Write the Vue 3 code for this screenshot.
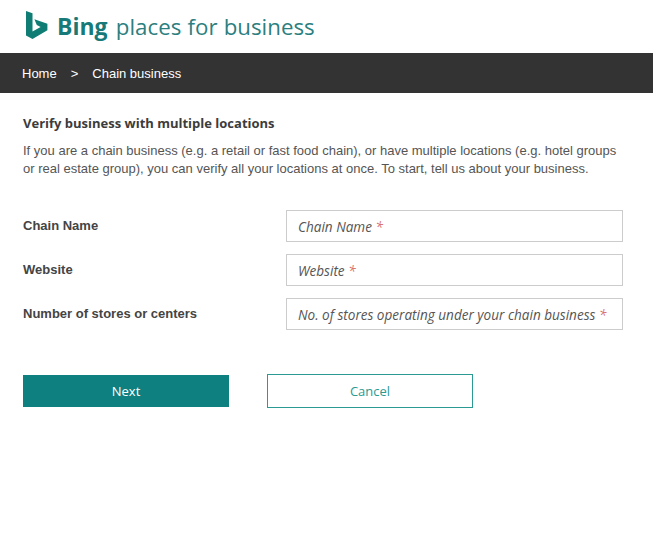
<template>
  <div class="page">
    <header class="brand">
      <svg class="logo" width="22" height="29" viewBox="0 0 22 29">
        <path d="M0 0 L6.5 2.2 L6.5 20.6 L14.6 15.9 L10.8 14.1 L8.4 8.2 L21.4 12.8 L21.4 19.2 L6.5 28 L0 24.4 Z" fill="#0f7d74" />
      </svg>
      <span class="brand-text"><b>Bing</b> places for business</span>
    </header>

    <nav class="crumbs">
      <span>Home</span>
      <span class="sep">&gt;</span>
      <span>Chain business</span>
    </nav>

    <main class="content">
      <h1>Verify business with multiple locations</h1>
      <p>
        If you are a chain business (e.g. a retail or fast food chain), or have multiple locations (e.g. hotel groups<br>
        or real estate group), you can verify all your locations at once. To start, tell us about your business.
      </p>

      <div class="form">
        <div v-for="f in fields" :key="f.label" class="row">
          <label>{{ f.label }}</label>
          <div class="input">{{ f.hint }} <span class="req">*</span></div>
        </div>
      </div>

      <div class="actions">
        <button class="btn next">Next</button>
        <button class="btn cancel">Cancel</button>
      </div>
    </main>
  </div>
</template>

<script setup>
const fields = [
  { label: 'Chain Name', hint: 'Chain Name' },
  { label: 'Website', hint: 'Website' },
  { label: 'Number of stores or centers', hint: 'No. of stores operating under your chain business' },
]
</script>

<style>
html, body { margin: 0; background: #fff; }
</style>

<style scoped>
.page { width: 653px; height: 551px; font-family: "Liberation Sans", Arial, sans-serif; color: #444; overflow: hidden; }

.brand { height: 53px; display: flex; align-items: flex-start; padding: 11px 0 0 26px; box-sizing: border-box; }
.logo { flex: none; }
.brand-text { margin-left: 9px; margin-top: -1px; font-family: "Open Sans", sans-serif; font-size: 22.3px; word-spacing: 0.4px; line-height: 32px; color: #2c7f80; white-space: nowrap; }
.brand-text b { font-size: 23px; font-weight: 700; color: #177a78; margin-right: 2px; }

.crumbs { height: 40px; background: #333; color: #fff; display: flex; align-items: center; padding-left: 22px; font-size: 13px; }
.sep { margin: 0 14px 0 14px; }

.content { padding: 22px 23px 0; }
h1 { margin: 0; font-family: "Open Sans", sans-serif; font-size: 13px; line-height: 16px; font-weight: 700; color: #3c3c3c; }
p { margin: 11px 0 0; font-size: 13px; line-height: 18px; color: #555; white-space: nowrap; }

.form { margin-top: 32px; display: flex; flex-direction: column; gap: 12px; }
.row { display: flex; height: 32px; }
label { width: 263px; flex: none; font-size: 13px; font-weight: 700; line-height: 31px; color: #444; }
.input { width: 337px; box-sizing: border-box; border: 1px solid #ccc; padding-left: 11px; font-family: "Open Sans", sans-serif; font-style: italic; font-size: 13.55px; line-height: 32px; color: #555; white-space: nowrap; }
.req { color: #d9706c; }

.actions { margin-top: 44px; display: flex; align-items: center; gap: 38px; }
.btn { width: 206px; font-family: "Open Sans", sans-serif; font-size: 13px; border-radius: 0; padding: 0; }
.next { height: 32px; background: #0f8080; color: #fff; border: 0; }
.cancel { height: 34px; background: #fff; color: #2a9a92; border: 1px solid #2a9a92; }
</style>
